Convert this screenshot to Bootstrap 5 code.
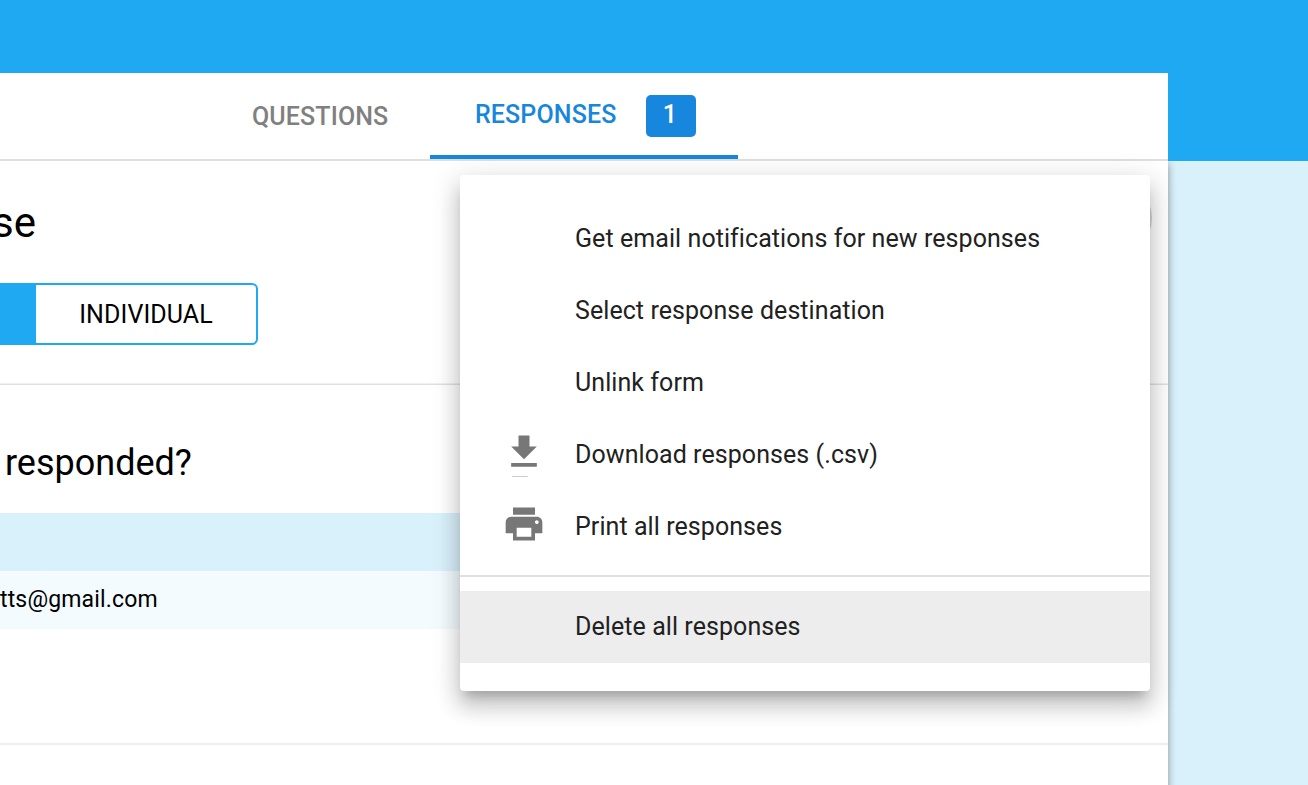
<!DOCTYPE html>
<html lang="en">
<head>
<meta charset="utf-8">
<meta name="viewport" content="width=device-width, initial-scale=1">
<title>Form responses</title>
<link href="https://cdn.jsdelivr.net/npm/bootstrap@5.3.0/dist/css/bootstrap.min.css" rel="stylesheet">
<style>
:root { --brand: #1ea9f2; --brand-dark: #1786dd; --tint: #d9f1fb; }
body { font-family: Roboto, "Liberation Sans", sans-serif; background: var(--tint); color: #000; height: 785px; overflow: hidden; }
.top-band { background: var(--brand); padding-top: 73px; height: 161px; z-index: 1; }
.sheet-width { width: 1168px; }
.tab-strip { height: 88px; border-bottom: 2px solid #dfdfdf; padding-left: 211px; }
.form-tabs .nav-link { height: 86px; font-size: 25px; line-height: 30px; font-weight: 500; color: #808080; padding: 0; border-radius: 0; letter-spacing: .12px; }
.form-tabs .tab-questions { width: 219px; padding: 29px 0 0 41px; }
.form-tabs .tab-responses { width: 308px; padding: 22px 0 0 45px; color: var(--brand-dark); border-bottom: 4px solid var(--brand-dark); }
.tab-label { line-height: 40px; width: 141px; }
.count-badge { width: 50px; height: 42px; margin-left: 30px; border-radius: 5px; background: var(--brand-dark); font-size: 25px; font-weight: 500; line-height: 40px; padding: 0 2px 0 0; }
.sheet { height: 640px; box-shadow: 0 2px 8px rgba(0,0,0,.4); }
.summary { height: 224px; border-bottom: 1px solid #e0e0e0; box-shadow: inset 0 -1px 0 #f0f0f0; padding-top: 35px; }
.summary h1 { font-size: 42px; font-weight: 400; line-height: 54px; margin-left: -8px; }
.more-btn { width: 80px; height: 80px; margin: -18px 16px -60px 0; background: #d6d6d6; }
.view-switch { height: 62px; margin-top: 33px; width: 258px; border: 2px solid var(--brand); border-left: 0; border-radius: 0 6px 6px 0; }
.view-switch .switch-on { width: 36px; background: var(--brand); }
.view-switch .switch-off { font-size: 25px; line-height: 60px; letter-spacing: .1px; }
.who { height: 360px; border-bottom: 2px solid #eee; padding-top: 54px; }
.who h2 { font-size: 36px; font-weight: 400; line-height: 48px; margin-left: 5px; }
.band-head { height: 58px; margin: 26px 48px 0 0; background: var(--tint); }
.band-row { height: 58px; margin-right: 48px; background: #f3fbff; font-size: 23px; line-height: 57px; letter-spacing: .16px; }
.actions-menu.dropdown-menu { left: 460px; top: 175px; width: 690px; padding: 28px 0; border: 0; border-radius: 4px; z-index: 5;
  box-shadow: 0 10px 10px -6px rgba(0,0,0,.2), 0 16px 20px 2px rgba(0,0,0,.14), 0 6px 28px 4px rgba(0,0,0,.12); }
.actions-menu .dropdown-item { height: 72px; padding: 0 0 0 42px; font-size: 25px; color: #212121; letter-spacing: .07px; }
.actions-menu .dropdown-item.current { background: #ededed; }
.actions-menu .dropdown-divider { margin: 12px 0 14px; border-top: 2px solid #e0e0e0; opacity: 1; }
.item-icon { width: 73px; height: 72px; padding-top: 11px; }
.item-icon svg { display: block; fill: #777; overflow: visible; }
</style>
</head>
<body class="position-relative">
<header class="top-band position-relative">
  <div class="tab-strip sheet-width bg-white">
    <nav class="nav form-tabs flex-nowrap">
      <a class="nav-link tab-questions" href="#">QUESTIONS</a>
      <a class="nav-link tab-responses d-flex align-items-start" href="#"><span class="tab-label">RESPONSES</span><span class="badge count-badge">1</span></a>
    </nav>
  </div>
</header>
<main class="sheet sheet-width bg-white">
  <section class="summary">
    <div class="d-flex justify-content-between">
      <h1 class="mb-0">se</h1>
      <button class="more-btn btn rounded-circle border-0" type="button" aria-label="More"></button>
    </div>
    <div class="view-switch d-flex overflow-hidden">
      <div class="switch-on"></div>
      <div class="switch-off flex-grow-1 text-center">INDIVIDUAL</div>
    </div>
  </section>
  <section class="who">
    <h2 class="mb-0">responded?</h2>
    <div class="band-head"></div>
    <div class="band-row">tts@gmail.com</div>
  </section>
</main>
<div class="dropdown-menu actions-menu d-block">
  <a class="dropdown-item d-flex align-items-center" href="#"><span class="item-icon"></span><span class="item-text">Get email notifications for new responses</span></a>
  <a class="dropdown-item d-flex align-items-center" href="#"><span class="item-icon"></span><span class="item-text">Select response destination</span></a>
  <a class="dropdown-item d-flex align-items-center" href="#"><span class="item-icon"></span><span class="item-text">Unlink form</span></a>
  <a class="dropdown-item d-flex align-items-center" href="#"><span class="item-icon"><svg width="44" height="44" viewBox="0 0 24 24"><path d="M19 9h-4V3H9v6H5l7 7 7-7zM5 18v2h14v-2H5z"/><path fill="#ccc" d="M5.5 25.1H14v.55H5.5z"/></svg></span><span class="item-text">Download responses (.csv)</span></a>
  <a class="dropdown-item d-flex align-items-center" href="#"><span class="item-icon"><svg width="44" height="44" viewBox="0 0 24 24"><path d="M19 8H5c-1.66 0-3 1.34-3 3v6h4v4h12v-4h4v-6c0-1.66-1.34-3-3-3zm-3 11H8v-5h8v5zm3-7c-.55 0-1-.45-1-1s.45-1 1-1 1 .45 1 1-.45 1-1 1zM18 3H6v4h12V3z"/></svg></span><span class="item-text">Print all responses</span></a>
  <hr class="dropdown-divider">
  <a class="dropdown-item current d-flex align-items-center" href="#"><span class="item-icon"></span><span class="item-text">Delete all responses</span></a>
</div>
<script src="https://cdn.jsdelivr.net/npm/bootstrap@5.3.0/dist/js/bootstrap.bundle.min.js"></script>
</body>
</html>
